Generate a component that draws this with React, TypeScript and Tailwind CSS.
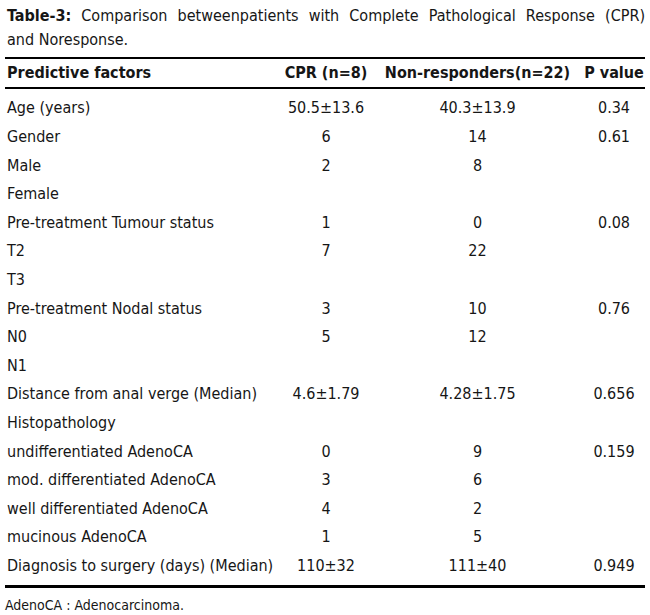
const rows: [string, string, string, string][] = [
  ['Age (years)', '50.5±13.6', '40.3±13.9', '0.34'],
  ['Gender', '6', '14', '0.61'],
  ['Male', '2', '8', ''],
  ['Female', '', '', ''],
  ['Pre-treatment Tumour status', '1', '0', '0.08'],
  ['T2', '7', '22', ''],
  ['T3', '', '', ''],
  ['Pre-treatment Nodal status', '3', '10', '0.76'],
  ['N0', '5', '12', ''],
  ['N1', '', '', ''],
  ['Distance from anal verge (Median)', '4.6±1.79', '4.28±1.75', '0.656'],
  ['Histopathology', '', '', ''],
  ['undifferentiated AdenoCA', '0', '9', '0.159'],
  ['mod. differentiated AdenoCA', '3', '6', ''],
  ['well differentiated AdenoCA', '4', '2', ''],
  ['mucinous AdenoCA', '1', '5', ''],
  ['Diagnosis to surgery (days) (Median)', '110±32', '111±40', '0.949'],
]

export default function App() {
  return (
    <div
      className="w-[650px] h-[615px] overflow-hidden bg-white text-[#161616] text-[16px] [font-stretch:condensed]"
      style={{ fontFamily: '"DejaVu Sans Condensed", "DejaVu Sans", "Liberation Sans Narrow", sans-serif' }}
    >
      <div className="pt-[4px] pl-[7px] pr-[5px] leading-[24px]">
        <p className="text-justify [text-align-last:justify]">
          <span className="font-bold">Table-3:</span> Comparison betweenpatients with Complete Pathological Response (CPR)
        </p>
        <p>and Noresponse.</p>
      </div>

      <table className="mt-[5px] ml-[5px] w-[640px] border-collapse">
        <colgroup>
          <col className="w-[275px]" />
          <col className="w-[92px]" />
          <col className="w-[211px]" />
          <col className="w-[62px]" />
        </colgroup>
        <thead>
          <tr className="h-[30px] border-t-2 border-b-2 border-black">
            <th className="pl-[2px] text-left font-bold">Predictive factors</th>
            <th className="text-center font-bold whitespace-nowrap">CPR (n=8)</th>
            <th className="text-center font-bold whitespace-nowrap">Non-responders(n=22)</th>
            <th className="text-center font-bold whitespace-nowrap">P value</th>
          </tr>
        </thead>
        <tbody className="border-b-[3px] border-black">
          {rows.map((r, i) => (
            <tr
              key={i}
              className={
                i === 0 ? 'h-[35px] align-bottom' : i === rows.length - 1 ? 'h-[35px] align-top' : 'h-[28.6px]'
              }
            >
              <td className="pl-[2px] whitespace-nowrap leading-[28.6px]">{r[0]}</td>
              <td className="text-center leading-[28.6px]">{r[1]}</td>
              <td className="text-center leading-[28.6px]">{r[2]}</td>
              <td className="text-center leading-[28.6px]">{r[3]}</td>
            </tr>
          ))}
        </tbody>
      </table>

      <p className="pl-[5px] pt-[8px] text-[14px] leading-[18px]">AdenoCA : Adenocarcinoma.</p>
    </div>
  )
}
